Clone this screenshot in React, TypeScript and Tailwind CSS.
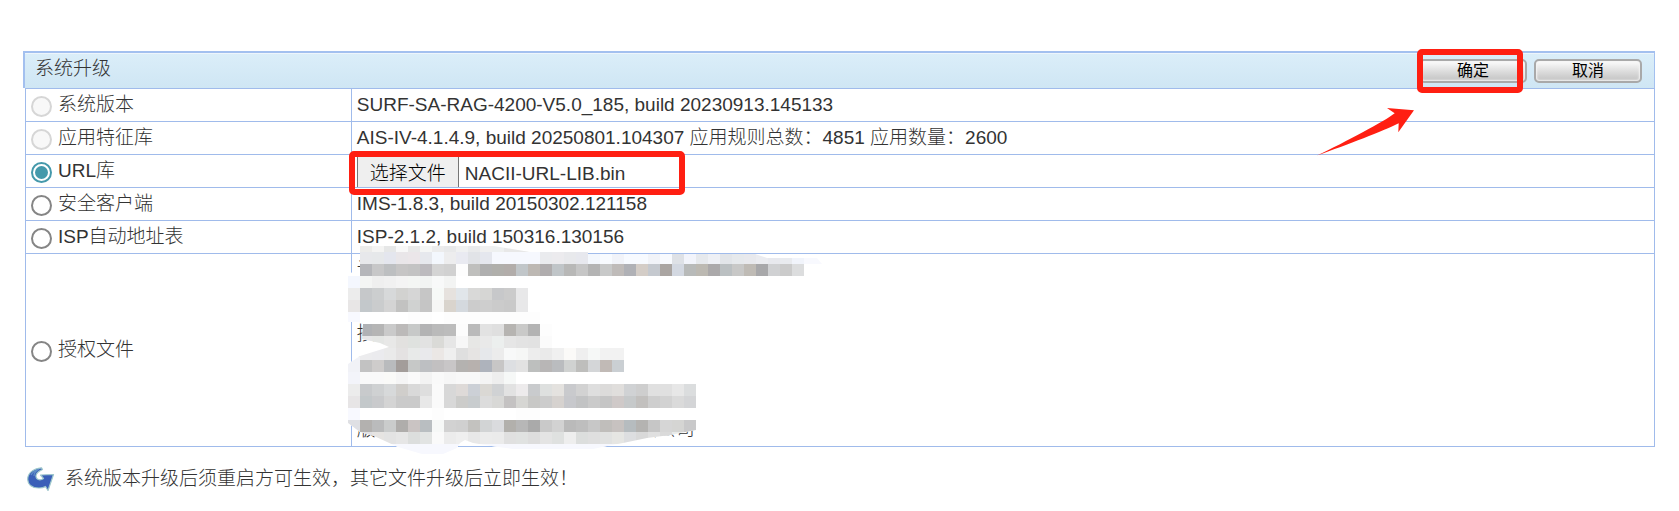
import { useState } from "react";
import type { ReactNode } from "react";

type Row = { id: string; label: string; disabled?: boolean; content: ReactNode };

const CELL = 12;

// Each strip: top edge, first column, and one colour per 12px block ("-" leaves a gap).
const STRIPS: [number, number, string][] = [
  [240, 1, "ececea f4f4f3 e6e7e7 f8f8f8 e9e9e9 f5f6f5 ececec e8e9ea f0f1f1 e9eaeb f0f0f0 eef0f0 e8e8e8 e8e8e8 eeeeee eeeeee ececec"],
  [252, 1, "e7e8eb e6e8ea e4e6ee e9e6e9 ebe6e9 e6e8ed f3f7fd ededee e9eaf1 e1e3e7 e5e7ee f6f8fe f6f8fe f6f8fe f6f8fe eaebee ecebee e8e9ec e7e8ee f3f7fd f8fbff f1f3f9 f7faff f7faff f1f3f8 f8fafe dee1e6 f2f4fb e6e9ed eef0f5 e2e5e9 e6e9ec e8e9ed ebecf0 e8e9ee e9ebef f1f4fb f8f9fe f8f9fe"],
  [264, 1, "b5b6ba c7c7c8 bdbfc1 c6c5c5 c3c3c3 bcbabe d4d4d4 d1d1d1 fdfdfd bfbfbd afafaf b0afab b2adaa c1c6c9 bdb8b3 b0adae c0c5c8 b8b8b7 c6c6c6 b4b4b4 c8c9c9 bfbbb9 b0b1b6 d4cdc7 c5c9cf aaa5a2 d3d8e1 b8bab9 bcb9b2 aba9aa bbc0c2 c8c8c7 bfbbb5 a8a8aa d0d1d3 cbcbcb dcddde"],
  [276, 0, "f4f7fe f4f5f4 efefef f1f1f1 f4f4f4 f4f6f4 f2f4f3 f8f9f9 f3f4f3"],
  [288, 0, "ececec c6c8ca cccecf d7d9da d2d2d0 d6d6d6 c6c6c6 f6f9f7 e6e2de e1e6ea d9d9d8 d6d6d4 c7c8ca cbcbcb e8e8e9"],
  [300, 0, "e8e6e6 c3c8cb cacccd d4d4d4 c2c2c1 d0d2d1 c5c5c5 f6f6f5 d9d4cd d4d9de cccccc cecece cbcbcb c9c9c9 e8e8e9"],
  [312, 0, "f8f9ff - - - - fdfdfd fdfdfd - fdfdfd fdfdfd fdfdfd fdfdfd fdfdfd fdfdfd fdfdfd fdfdfd"],
  [324, 1, "b0b2b5 b5b5b5 cacaca bcbab9 c7c9c8 b3b3b4 bababa bcbcbc fcfcfc bababa e2e2e2 dfdfdf b6b4b1 c9c9c8 b3b3b3 fdfdfd"],
  [336, 1, "e6e6e7 e4e6e4 e8e8e7 e2e1df dfe2df e2e2e2 dadad7 e6e6e6 f7f7f7 e7e7e5 e9e9e9 ecefee e6e6e6 e3e3e3 e2e2e2 fbfbfb"],
  [348, 0, "f1f2f7 ececee ebebee eaeaea e4e2e2 e8eae9 e9e9ec ebe7e5 efefef dfdfdf e6e4e3 e6e8eb ececec f8f9f9 f6f7f6 ededed eaeaea f0f0f0 fbfaf8 efefef f6f8f7 f2f2f2 f2f2f2"],
  [360, 0, "f1f2f7 c2c2c2 cecccb b9bbbd a39d9a c6c8c7 bdbfc2 c2c0c1 c8c6c7 b4b2b0 b7b1ae aeb3bc c7c6c6 dddfe2 e2e2e2 bdbfbe b8b6b6 babcbf d0d2d1 bebebc d4d6d8 c1bab6 cacfd3"],
  [372, 0, "f3f4fa f9f9f9 f9f9f9 fafaf8 f5f5f5 fafafa f3f3f3 f9f9f9 f6f6f6 f8f8f8 f8f8f8 f4f4f4 eeeeee f6f8f7"],
  [384, 0, "ececec c8cacc cfd1d2 d7d9da d0cecb d9d9d9 dedede fafafa d8d8d8 dedad8 ccd0d6 dad8d4 d0d2d4 e2e2e2 edebec c9cbcd dee0df e4e2df c9cacd d2d2d2 dedede dcdbda e0dedc d0d2d4 cecece e0e0e0 e0e0e0 e7e7e7 dbddde"],
  [396, 0, "e7e5e6 c3c8ca c9cacc d4d4d4 cacaca cacaca e8e8e8 fafafa d8d8d8 ccccca c8ccce dcdcdc d8d8d6 c4c2c2 d6d6d3 c8c8c6 cccccc d6d2cf c7c8cc c2c3c4 cacaca c5c5c5 cfc9c8 c6c9ca c2c0be cecece d2d2d2 dadada d4d5d7"],
  [408, 0, "f8f9ff - - - - - - fdfdfd - - - - - - fdfdfd fdfdfd"],
  [420, 0, "dfe0e4 b3b1af babbbc cacccc afadab cac4c3 b9bec1 f6f8f7 d2d2d2 d0d0d0 c3c2bf d2d4d5 dadbde b2b0ac b7b7b7 aaaaaa c9c9c9 d2d2d2 bababa bebebe c7c7c7 c0bebb c7c2c0 b6bcbf b4b3b1 c6c6c6 d6d6d6 d5d5d3 c9c9ca"],
  [432, 1, "e0e0e4 e6e4e2 e3e3e3 e6e6e6 dcdedd e2e4e3 fafafa ececec efefef e8e8e8 ececec ebebeb e0e0e0 e0e2e1 dddddd e4e4e4 dfe1e0 eeeeee dcdedd dfdfdf e1e2e1 e6e6e3 dddee0 d9d9d9 e0e0e0 dadada e9ebea eeeeee"],
  [444, 2, "f7f8fe f7f8fe f7f8fe f7f8fe f7f8fe f7f8fe f7f8fe f7f8fe f7f8fe f7f8fe f7f8fe f7f8fe f7f8fe f7f8fe f7f8fe f7f8fe f7f8fe f7f8fe f7f8fe f7f8fe f7f8fe"],
];

const OUTLINE =
  "360,246 494,246 518,250 530,252 588,252 588,254 755,254 767,258 817,258 822,264 822,420 696,420 696,430 670,435 647,438 623,443 607,446 593,449 513,449 498,447 473,443 465,440 460,443 457,448 443,454 422,454 398,447 374,436 360,432 348,423 348,364 360,356 389,347 380,343 362,339 363,324 358,322 348,322 348,273 357,272 360,270";

function Mosaic() {
  return (
    <svg
      aria-hidden="true"
      className="pointer-events-none absolute -left-[9px] -top-2 h-[210px] w-[480px]"
      viewBox="348 246 480 210"
      shapeRendering="crispEdges"
    >
      <clipPath id="smear">
        <polygon points={OUTLINE} />
      </clipPath>
      <g clipPath="url(#smear)">
        <rect x="348" y="256" width="480" height="200" fill="#fff" />
        {STRIPS.map(([y, first, colours]) =>
          colours.split(" ").map((c, i) =>
            c === "-" ? null : (
              <rect
                key={`${y}-${i}`}
                x={348 + (first + i) * CELL}
                y={y}
                width={CELL}
                height={CELL}
                fill={`#${c}`}
              />
            ),
          ),
        )}
      </g>
    </svg>
  );
}

function FilePicker() {
  return (
    <div className="relative flex h-8 items-stretch">
      <label
        htmlFor="upgrade-file"
        className="flex w-[102px] cursor-pointer items-center justify-center border-x border-[#767676] bg-[#efefef] pt-1.5 text-black"
      >
        选择文件
      </label>
      <input id="upgrade-file" type="file" className="sr-only" />
      <span className="flex items-center pl-[6px] pt-1.5">NACII-URL-LIB.bin</span>
      <span className="pointer-events-none absolute -left-2 -top-1 h-11 w-[336px] rounded-[5px] border-[6px] border-[#ff1f12]" />
    </div>
  );
}

function License() {
  return (
    <div className="relative h-48 w-full leading-8">
      <p className="h-8">许</p>
      <p className="h-8" />
      <p className="h-8">授</p>
      <p className="h-8">许</p>
      <p className="h-8" />
      <p className="flex h-8 w-[338px] justify-between">
        <span>版</span>
        <span>限公司</span>
      </p>
      <Mosaic />
    </div>
  );
}

const ROWS: Row[] = [
  { id: "system", label: "系统版本", disabled: true, content: "SURF-SA-RAG-4200-V5.0_185, build 20230913.145133" },
  {
    id: "feature",
    label: "应用特征库",
    disabled: true,
    content: "AIS-IV-4.1.4.9, build 20250801.104307 应用规则总数：4851 应用数量：2600",
  },
  { id: "url", label: "URL库", content: <FilePicker /> },
  { id: "client", label: "安全客户端", content: "IMS-1.8.3, build 20150302.121158" },
  { id: "isp", label: "ISP自动地址表", content: "ISP-2.1.2, build 150316.130156" },
  { id: "license", label: "授权文件", content: <License /> },
];

const buttonClass =
  "h-6 w-[108px] rounded-[5px] border-2 border-[#a9a9a9] bg-linear-to-b from-[#fdfdfd] via-[#dedede] to-[#c2c2c2] text-base leading-5 font-normal text-black shadow-[inset_0_0_2px_1px_#f4f4f4]";

export default function App() {
  const [selected, setSelected] = useState("url");

  return (
    <main className="min-h-screen bg-white pt-[51px] pr-6 pl-[23px] font-['Liberation_Sans','Noto_Sans_CJK_SC',sans-serif] text-[19px] leading-7 font-light text-[#333]">
      <header className="flex h-[37px] items-center justify-between border-t-2 border-r border-l-2 border-[#a3c0ef] bg-linear-to-b from-[#dbeef9] to-[#cfe6f4] pr-3 pl-[10px] shadow-[inset_0_1px_0_#edf5fc]">
        <h1 className="pb-1">系统升级</h1>
        <div className="relative flex gap-[7px]">
          <button type="button" className={buttonClass}>
            确定
          </button>
          <button type="button" className={buttonClass}>
            取消
          </button>
          <span className="pointer-events-none absolute -top-[10px] -left-[2px] h-11 w-[106px] rounded-[5px] border-[6px] border-[#ff1f12]" />
          <svg
            aria-hidden="true"
            className="pointer-events-none absolute top-12 -left-[103px] h-[50px] w-[100px]"
            viewBox="1316 107 100 50"
          >
            <path
              d="M1414 110.3L1387 108L1394.7 113.2C1385 121 1345 142 1317 155.6C1348 144.500 1383 131 1398.700 123.300L1398.300 132.300Z"
              fill="#ff1f12"
            />
          </svg>
        </div>
      </header>

      <div className="pl-[2px]">
        <table className="w-full table-fixed border-collapse">
          <tbody>
            {ROWS.map((row) => (
              <tr key={row.id} className="h-[33px]">
                <th scope="row" className="w-1/5 border border-[#a0bbeb] p-0 text-left align-middle font-light">
                  <div className="flex items-center gap-[6px] pl-[5px]">
                    <input
                      id={row.id}
                      type="radio"
                      name="target"
                      disabled={row.disabled}
                      checked={selected === row.id}
                      onChange={() => setSelected(row.id)}
                      className="mt-[3px] size-[21px] shrink-0 appearance-none rounded-full border-2 border-[#858585] bg-white bg-clip-content p-[2px] checked:border-[#4599ab] checked:bg-[#4599ab] disabled:border-[#d6d6d6] disabled:bg-[#f8f8f8] disabled:bg-clip-border"
                    />
                    <label htmlFor={row.id}>{row.label}</label>
                  </div>
                </th>
                <td className="border border-[#a0bbeb] p-0 pl-[5px] align-middle">{row.content}</td>
              </tr>
            ))}
          </tbody>
        </table>
      </div>

      <footer className="mt-[18px] flex items-center gap-[10px] pl-1">
        <svg aria-hidden="true" className="h-6 w-7 shrink-0" viewBox="0 0 28 24">
          <path
            d="M14.500 0.800C6 1.500 0.500 6.500 0.700 12.500C1 18.500 6 21 12 21C15 21 17 20.500 18.500 19.500L21 23.500L26.500 7.500L13.500 8L16.500 11.500C14 13.500 9.500 13.500 9 9.500C8.700 6.500 11 4.500 15.500 2.500Z"
            fill="#3a5fb8"
            stroke="#9fc8cc"
            strokeWidth="1.200"
            strokeLinejoin="round"
          />
          <path d="M4 8C5.500 5 8 3.200 12 2.300C8.500 4 7 6 7 9" fill="none" stroke="#5f8fc6" strokeWidth="1.200" />
        </svg>
        <p>系统版本升级后须重启方可生效，其它文件升级后立即生效！</p>
      </footer>
    </main>
  );
}
